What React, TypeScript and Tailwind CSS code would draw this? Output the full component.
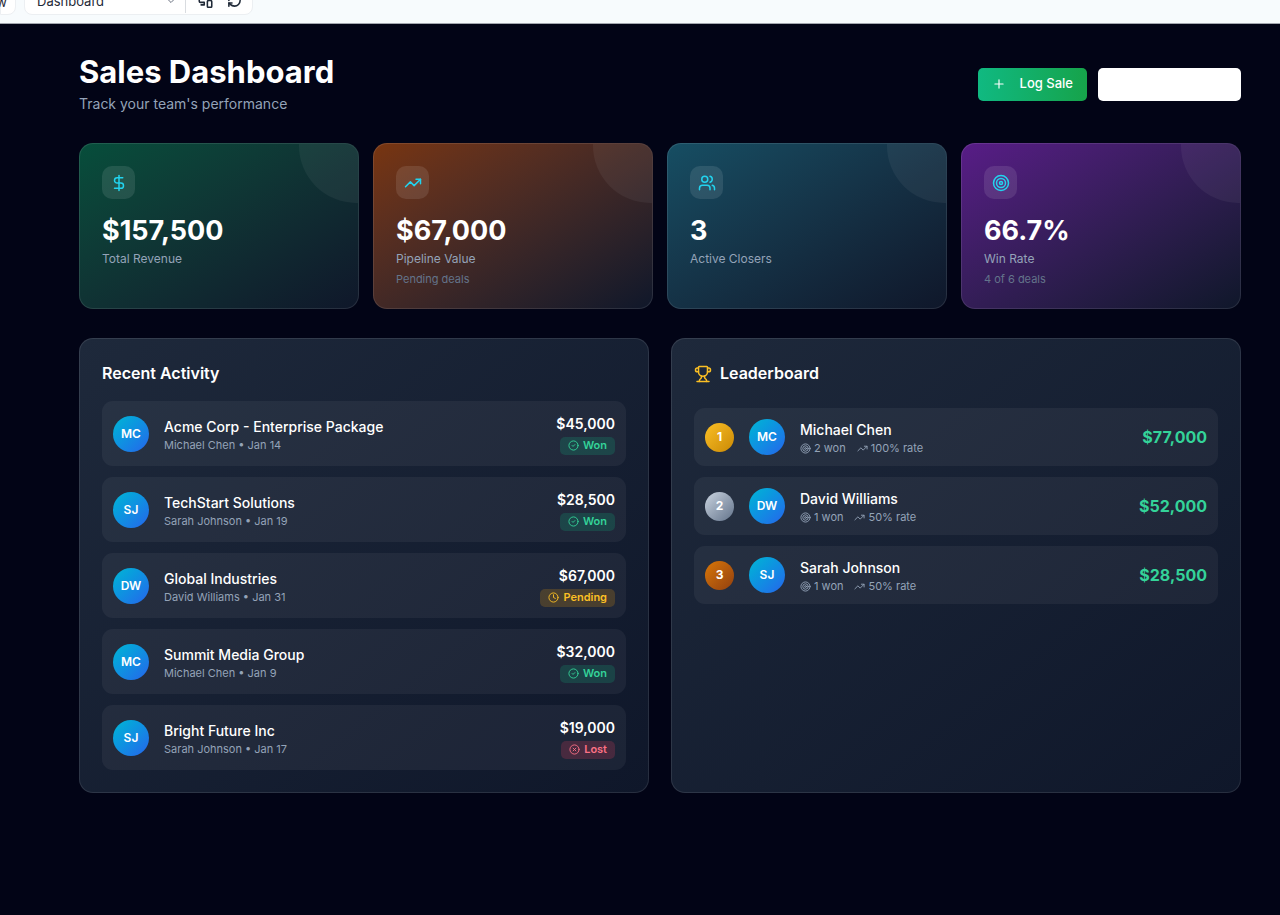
import React from 'react';
import {
  ChevronDown,
  CircleCheck,
  CircleX,
  Clock,
  DollarSign,
  Plus,
  RefreshCw,
  Target,
  TrendingUp,
  Trophy,
  Users,
  type LucideIcon,
} from 'lucide-react';

type Status = 'won' | 'pending' | 'lost';

interface Stat {
  icon: LucideIcon;
  value: string;
  label: string;
  hint?: string;
  gradient: string;
}

interface Deal {
  initials: string;
  name: string;
  closer: string;
  date: string;
  amount: string;
  status: Status;
}

interface Leader {
  initials: string;
  name: string;
  won: number;
  rate: string;
  total: string;
  medal: string;
}

const stats: Stat[] = [
  { icon: DollarSign, value: '$157,500', label: 'Total Revenue', gradient: 'from-[#064e3b] to-[#0f172a]' },
  { icon: TrendingUp, value: '$67,000', label: 'Pipeline Value', hint: 'Pending deals', gradient: 'from-[#78350f] to-[#0f172a]' },
  { icon: Users, value: '3', label: 'Active Closers', gradient: 'from-[#164e63] to-[#0f172a]' },
  { icon: Target, value: '66.7%', label: 'Win Rate', hint: '4 of 6 deals', gradient: 'from-[#581c87] to-[#0f172a]' },
];

const deals: Deal[] = [
  { initials: 'MC', name: 'Acme Corp - Enterprise Package', closer: 'Michael Chen', date: 'Jan 14', amount: '$45,000', status: 'won' },
  { initials: 'SJ', name: 'TechStart Solutions', closer: 'Sarah Johnson', date: 'Jan 19', amount: '$28,500', status: 'won' },
  { initials: 'DW', name: 'Global Industries', closer: 'David Williams', date: 'Jan 31', amount: '$67,000', status: 'pending' },
  { initials: 'MC', name: 'Summit Media Group', closer: 'Michael Chen', date: 'Jan 9', amount: '$32,000', status: 'won' },
  { initials: 'SJ', name: 'Bright Future Inc', closer: 'Sarah Johnson', date: 'Jan 17', amount: '$19,000', status: 'lost' },
];

const leaders: Leader[] = [
  { initials: 'MC', name: 'Michael Chen', won: 2, rate: '100%', total: '$77,000', medal: 'from-[#fbbf24] to-[#ca8a04]' },
  { initials: 'DW', name: 'David Williams', won: 1, rate: '50%', total: '$52,000', medal: 'from-[#cbd5e1] to-[#64748b]' },
  { initials: 'SJ', name: 'Sarah Johnson', won: 1, rate: '50%', total: '$28,500', medal: 'from-[#d97706] to-[#92400e]' },
];

const statusStyles: Record<Status, { label: string; icon: LucideIcon; className: string }> = {
  won: { label: 'Won', icon: CircleCheck, className: 'bg-[#10b981]/20 text-[#34d399]' },
  pending: { label: 'Pending', icon: Clock, className: 'bg-[#f59e0b]/20 text-[#fbbf24]' },
  lost: { label: 'Lost', icon: CircleX, className: 'bg-[#f43f5e]/20 text-[#fb7185]' },
};

const Toolbar: React.FC = () => (
  <div className="h-6 overflow-hidden border-b border-[#a3a7af] bg-[#f7fbfd] text-[#1f2937]">
    <div className="-mt-3 flex h-[27px] gap-2">
      <button className="h-[27px] w-4 rounded-br-lg border border-[#eceff2] bg-white pr-2 text-[13px] leading-6">
        <span className="float-right">w</span>
      </button>
      <div className="flex h-[27px] w-[229px] items-center rounded-lg border border-[#eceff2] bg-white pb-[2px]">
        <button className="flex flex-1 items-center justify-between pl-3 pr-2 text-[13px] leading-5">
          Dashboard
          <ChevronDown size={12} className="text-[#6b7280]" />
        </button>
        <span className="h-6 w-px bg-[#d9dce0]" />
        <button className="mx-3" aria-label="Switch device">
          <svg width="15" height="15" viewBox="0 0 24 24" fill="none" stroke="currentColor" strokeWidth="2.5" strokeLinecap="round" strokeLinejoin="round">
            <path d="M9 15H4a2 2 0 0 1-2-2V5a2 2 0 0 1 2-2h14a2 2 0 0 1 2 2v2" />
            <path d="M5 19h5M10 15v4" />
            <rect x="15" y="12" width="7" height="11" rx="2" />
          </svg>
        </button>
        <button className="ml-[2px] mr-[10px]" aria-label="Refresh">
          <RefreshCw size={15} strokeWidth={2.5} />
        </button>
      </div>
    </div>
  </div>
);

const Avatar: React.FC<{ initials: string }> = ({ initials }) => (
  <div className="flex h-9 w-9 shrink-0 items-center justify-center rounded-full bg-gradient-to-br from-[#06b6d4] to-[#2563eb] text-[12px] font-semibold text-white">
    {initials}
  </div>
);

const StatCard: React.FC<{ stat: Stat }> = ({ stat }) => {
  const Icon = stat.icon;
  return (
    <div className={`relative h-[166px] overflow-hidden rounded-[14px] border border-white/10 bg-gradient-to-br bg-origin-border p-[22px] ${stat.gradient}`}>
      <div className="absolute -right-14 -top-14 h-[115px] w-[115px] rounded-full bg-white/5" />
      <div className="flex h-[33px] w-[33px] items-center justify-center rounded-[10px] bg-white/10">
        <Icon size={18} className="text-[#22d3ee]" />
      </div>
      <p className="mt-4 text-[27px] font-bold leading-8 text-white">{stat.value}</p>
      <p className="mt-[3px] text-[12px] leading-[18px] text-[#94a3b8]">{stat.label}</p>
      {stat.hint && <p className="mt-[3px] text-[11px] leading-4 text-[#64748b]">{stat.hint}</p>}
    </div>
  );
};

const DealRow: React.FC<{ deal: Deal }> = ({ deal }) => {
  const status = statusStyles[deal.status];
  const StatusIcon = status.icon;
  return (
    <li className="flex h-[65px] items-center gap-[15px] rounded-[11px] bg-white/5 px-[11px]">
      <Avatar initials={deal.initials} />
      <div className="min-w-0 flex-1">
        <p className="truncate text-[14px] font-medium leading-[22px] text-white">{deal.name}</p>
        <p className="text-[11px] leading-[14px] text-[#94a3b8]">
          {deal.closer} • {deal.date}
        </p>
      </div>
      <div className="flex flex-col items-end gap-[2px]">
        <p className="text-[14px] font-semibold leading-[22px] text-white">{deal.amount}</p>
        <span className={`flex h-[18px] items-center gap-1 rounded-[5px] px-2 text-[11px] font-semibold ${status.className}`}>
          <StatusIcon size={11} />
          {status.label}
        </span>
      </div>
    </li>
  );
};

const LeaderRow: React.FC<{ leader: Leader; rank: number }> = ({ leader, rank }) => (
  <li className="flex items-center gap-[15px] rounded-[11px] bg-white/5 p-[11px]">
    <div className={`flex h-[29px] w-[29px] items-center justify-center rounded-full bg-gradient-to-br text-[12px] font-bold text-white ${leader.medal}`}>
      {rank}
    </div>
    <Avatar initials={leader.initials} />
    <div className="flex-1">
      <p className="text-[14px] font-medium leading-[22px] text-white">{leader.name}</p>
      <div className="flex gap-[11px] text-[11px] leading-[14px] text-[#94a3b8]">
        <span className="flex items-center gap-[3px]">
          <Target size={11} />
          {leader.won} won
        </span>
        <span className="flex items-center gap-[3px]">
          <TrendingUp size={11} />
          {leader.rate} rate
        </span>
      </div>
    </div>
    <p className="text-[16px] font-bold text-[#34d399]">{leader.total}</p>
  </li>
);

const App: React.FC = () => {
  return (
    <div className="flex min-h-screen flex-col bg-[#020416] font-['Inter',sans-serif]">
      <Toolbar />
      <main className="flex-1 pb-10 pl-[79px] pr-[39px] pt-[29px]">
        <header className="flex items-center justify-between">
          <div>
            <h1 className="text-[31px] font-bold leading-[38px] text-white">Sales Dashboard</h1>
            <p className="mt-[2px] text-[14px] leading-[22px] text-[#94a3b8]">Track your team's performance</p>
          </div>
          <div className="flex gap-[11px]">
            <button className="flex h-[33px] items-center gap-[14px] rounded-[5px] bg-gradient-to-r from-[#10b981] to-[#16a34a] px-[14px] text-[13px] font-medium text-white">
              <Plus size={14} />
              Log Sale
            </button>
            <button className="h-[33px] w-[143px] rounded-[5px] bg-white" aria-label="Add closer" />
          </div>
        </header>

        <section className="mt-7 grid grid-cols-4 gap-[14px]">
          {stats.map((stat) => (
            <StatCard key={stat.label} stat={stat} />
          ))}
        </section>

        <div className="mt-[29px] grid grid-cols-2 gap-[22px]">
          <section className="rounded-[14px] border border-white/10 bg-gradient-to-br from-[#1e293b] to-[#0f172a] bg-origin-border p-[22px]">
            <h2 className="text-[16px] font-semibold leading-[25px] text-white">Recent Activity</h2>
            <ul className="mt-[15px] flex flex-col gap-[11px]">
              {deals.map((deal) => (
                <DealRow key={deal.name} deal={deal} />
              ))}
            </ul>
          </section>

          <section className="rounded-[14px] border border-white/10 bg-gradient-to-br from-[#1e293b] to-[#0f172a] bg-origin-border p-[22px]">
            <h2 className="flex items-center gap-2 text-[16px] font-semibold leading-[25px] text-white">
              <Trophy size={18} className="text-[#fbbf24]" />
              Leaderboard
            </h2>
            <ol className="mt-[22px] flex flex-col gap-[11px]">
              {leaders.map((leader, i) => (
                <LeaderRow key={leader.name} leader={leader} rank={i + 1} />
              ))}
            </ol>
          </section>
        </div>
      </main>
    </div>
  );
};

export default App;
